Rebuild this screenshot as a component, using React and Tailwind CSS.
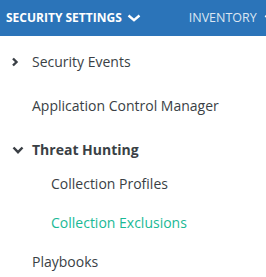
import React from 'react';

const ChevronRight = () => (
  <svg width="8" height="10" viewBox="0 0 8 10" className="absolute left-[11px] top-[5px]">
    <path d="M2 1.5 L5.5 5 L2 8.5" fill="none" stroke="#3a3f45" strokeWidth="2.4" />
  </svg>
);

const ChevronDown = ({ color, className, w = 12 }) => (
  <svg width={w} height="8" viewBox={`0 0 ${w} 8`} className={className}>
    <path d={`M1.5 1.5 L${w / 2} 6.2 L${w - 1.5} 1.5`} fill="none" stroke={color} strokeWidth="2.4" />
  </svg>
);

export default function App() {
  const font = { fontFamily: '"Open Sans", sans-serif' };

  return (
    <div className="w-[266px] h-[277px] bg-white overflow-hidden" style={font}>
      <div className="h-[36px] bg-[#2b74b9] flex items-center whitespace-nowrap">
        <div className="flex items-center shrink-0 pl-[6px] text-white text-[12px] font-bold">
          SECURITY SETTINGS
          <ChevronDown color="#ffffff" w={14} className="ml-[5px] shrink-0" />
        </div>
        <div className="flex items-center shrink-0 ml-[48px] text-[#dbe6f2] text-[12.5px]">
          INVENTORY
          <ChevronDown color="#ffffff" className="ml-[7px] shrink-0" />
        </div>
      </div>

      <ul className="text-[14px] leading-[20px] text-[#3a3f45] pt-[16px]">
        <li className="relative pl-[32px] h-[20px]">
          <ChevronRight />
          Security Events
        </li>
        <li className="pl-[32px] h-[20px] mt-[24px]">Application Control Manager</li>
        <li className="relative pl-[32px] h-[20px] mt-[24px] font-bold">
          <ChevronDown color="#3a3f45" className="absolute left-[12px] top-[6px]" />
          Threat Hunting
        </li>
        <li className="pl-[51px] h-[20px] mt-[14px]">Collection Profiles</li>
        <li className="pl-[51px] h-[20px] mt-[19px] text-[#19b996]">Collection Exclusions</li>
        <li className="pl-[32px] h-[20px] mt-[19px]">Playbooks</li>
      </ul>
    </div>
  );
}
